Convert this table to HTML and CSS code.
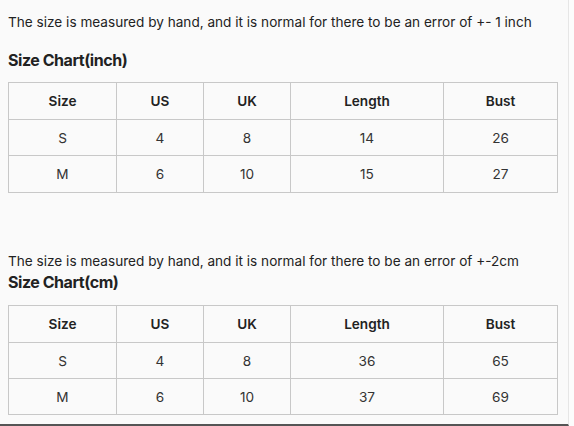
FILE: index.html
```html
<!DOCTYPE html>
<html>
<head>
<meta charset="utf-8">
<link rel="stylesheet" href="styles.css">
</head>
<body>
<div class="page">
  <p class="note first">The size is measured by hand, and it is normal for there to be an error of +- 1 inch</p>
  <h3 class="title">Size Chart(inch)</h3>
  <table class="chart">
    <tr><th>Size</th><th>US</th><th>UK</th><th>Length</th><th>Bust</th></tr>
    <tr><td>S</td><td>4</td><td>8</td><td>14</td><td>26</td></tr>
    <tr class="last"><td>M</td><td>6</td><td>10</td><td>15</td><td>27</td></tr>
  </table>
  <p class="note second">The size is measured by hand, and it is normal for there to be an error of +-2cm</p>
  <h3 class="title tight">Size Chart(cm)</h3>
  <table class="chart">
    <tr><th>Size</th><th>US</th><th>UK</th><th>Length</th><th>Bust</th></tr>
    <tr><td>S</td><td>4</td><td>8</td><td>36</td><td>65</td></tr>
    <tr><td>M</td><td>6</td><td>10</td><td>37</td><td>69</td></tr>
  </table>
</div>
</body>
</html>
```
FILE: styles.css
```css
html, body {
  margin: 0;
  padding: 0;
  background: #fcfcfc;
}
body {
  font-family: Inter, "Noto Sans", sans-serif;
  color: #222;
  width: 574px;
  height: 426px;
  overflow: hidden;
}
.page {
  width: 560px;
  height: 424px;
  padding: 0 0 0 8px;
  background: #fafafa;
  border-right: 1px solid #e6e6e6;
  border-bottom: 2px solid #555;
  box-sizing: content-box;
  overflow: hidden;
}
.note {
  font-size: 13.6px;
  line-height: 20px;
  margin: 0;
}
.first {
  padding-top: 12px;
}
.second {
  margin-top: 58px;
}
.title {
  font-size: 16px;
  font-weight: 700;
  letter-spacing: -0.45px;
  line-height: 22px;
  margin: 17px 0 11px;
}
.title.tight {
  line-height: 22px;
  margin: 0 0 12px;
}
.chart {
  border-collapse: collapse;
  width: 550px;
  table-layout: fixed;
  font-size: 13.6px;
}
.chart th, .chart td {
  border: 1px solid #c8c8c8;
  text-align: center;
  height: 36px;
  padding: 0;
  box-sizing: border-box;
}
.chart th {
  font-weight: 600;
  height: 37px;
}
.chart .last td {
  height: 37px;
}
.chart td {
  font-weight: 400;
  color: #333;
}
.chart th:nth-child(1) { width: 108px; }
.chart th:nth-child(2) { width: 87px; }
.chart th:nth-child(3) { width: 87px; }
.chart th:nth-child(4) { width: 153px; }
.chart th:nth-child(5) { width: 114px; }
```
